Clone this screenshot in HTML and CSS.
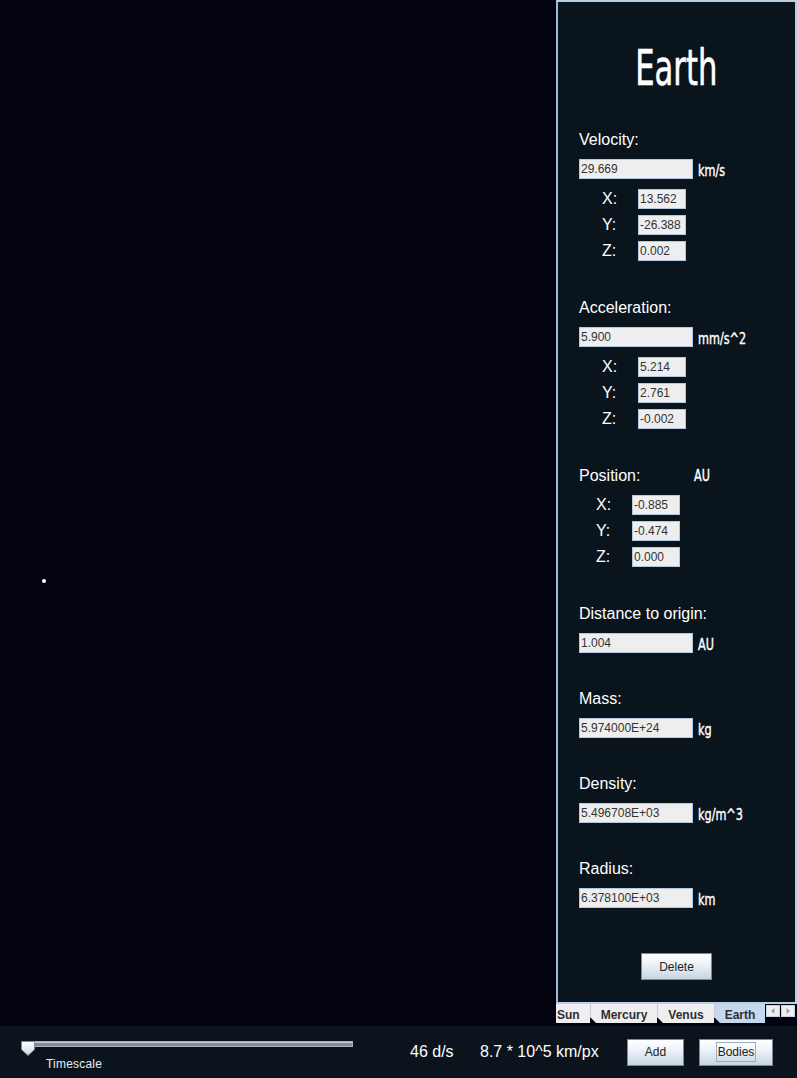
FILE: index.html
```
<!DOCTYPE html>
<html>
<head>
<meta charset="utf-8">
<title>Earth</title>
<link rel="stylesheet" href="styles.css">
</head>
<body>
<div class="app">
  <div class="main">
    <div class="space"><span class="body-dot"></span></div>
    <div class="side">
      <div class="panel">
        <h1 class="title"><span class="title-text">Earth</span></h1>

        <section class="group first">
          <div class="label">Velocity:</div>
          <div class="value-row"><div class="field wide">29.669</div><span class="unit">km/s</span></div>
          <div class="axes">
            <div class="axis"><span class="axis-label">X:</span><div class="field small">13.562</div></div>
            <div class="axis"><span class="axis-label">Y:</span><div class="field small">-26.388</div></div>
            <div class="axis"><span class="axis-label">Z:</span><div class="field small">0.002</div></div>
          </div>
        </section>

        <section class="group sep">
          <div class="label">Acceleration:</div>
          <div class="value-row"><div class="field wide">5.900</div><span class="unit">mm/s^2</span></div>
          <div class="axes">
            <div class="axis"><span class="axis-label">X:</span><div class="field small">5.214</div></div>
            <div class="axis"><span class="axis-label">Y:</span><div class="field small">2.761</div></div>
            <div class="axis"><span class="axis-label">Z:</span><div class="field small">-0.002</div></div>
          </div>
        </section>

        <section class="group sep">
          <div class="label label-row"><span class="label-fixed">Position:</span><span class="unit unit-inline">AU</span></div>
          <div class="axes axes-pos">
            <div class="axis"><span class="axis-label">X:</span><div class="field small">-0.885</div></div>
            <div class="axis"><span class="axis-label">Y:</span><div class="field small">-0.474</div></div>
            <div class="axis"><span class="axis-label">Z:</span><div class="field small">0.000</div></div>
          </div>
        </section>

        <section class="group sep">
          <div class="label">Distance to origin:</div>
          <div class="value-row"><div class="field wide">1.004</div><span class="unit">AU</span></div>
        </section>

        <section class="group sep2">
          <div class="label">Mass:</div>
          <div class="value-row"><div class="field wide">5.974000E+24</div><span class="unit">kg</span></div>
        </section>

        <section class="group sep2">
          <div class="label">Density:</div>
          <div class="value-row"><div class="field wide">5.496708E+03</div><span class="unit">kg/m^3</span></div>
        </section>

        <section class="group sep2">
          <div class="label">Radius:</div>
          <div class="value-row"><div class="field wide">6.378100E+03</div><span class="unit">km</span></div>
        </section>

        <div class="actions"><button class="btn btn-delete">Delete</button></div>
      </div>
      <div class="tabs">
        <div class="tab tab-sun">Sun</div>
        <div class="tab cut">Mercury</div>
        <div class="tab cut">Venus</div>
        <div class="tab cut selected">Earth</div>
        <div class="tab-scroll">
          <span class="arrow-btn"><svg width="12" height="10" viewBox="0 0 12 10"><polygon points="7.5,2 7.5,8 4,5" fill="#9aa0a6"/></svg></span>
          <span class="arrow-btn"><svg width="12" height="10" viewBox="0 0 12 10"><polygon points="4.5,2 4.5,8 8,5" fill="#9aa0a6"/></svg></span>
        </div>
      </div>
    </div>
  </div>
  <div class="bottombar">
    <div class="slider-block">
      <div class="slider">
        <div class="track"></div>
        <svg class="thumb" width="15" height="16" viewBox="0 0 15 16">
          <defs>
            <linearGradient id="tg" x1="0" y1="0" x2="0" y2="1">
              <stop offset="0" stop-color="#ffffff"/>
              <stop offset="1" stop-color="#c9d6e3"/>
            </linearGradient>
          </defs>
          <polygon points="0.5,0.5 13.5,0.5 13.5,8.5 7,14.5 0.5,8.5" fill="url(#tg)" stroke="#7d8b99" stroke-width="1"/>
        </svg>
      </div>
      <div class="slider-label">Timescale</div>
    </div>
    <span class="readout speed">46 d/s</span>
    <span class="readout scale">8.7 * 10^5 km/px</span>
    <button class="btn btn-add">Add</button>
    <button class="btn btn-bodies"><span class="focus">Bodies</span></button>
  </div>
</div>
</body>
</html>
```
FILE: styles.css
```
* { box-sizing: border-box; }
html, body { margin: 0; padding: 0; }
body {
  width: 797px;
  height: 1078px;
  overflow: hidden;
  background: #03030f;
  font-family: "Liberation Sans", Arial, sans-serif;
}
.app { display: flex; flex-direction: column; width: 797px; height: 1078px; }
.main { display: flex; height: 1026px; }
.space {
  position: relative;
  width: 556px;
  height: 1026px;
  background: #03030f;
}
.body-dot {
  position: absolute;
  left: 42px;
  top: 579px;
  width: 4px;
  height: 4px;
  border-radius: 50%;
  background: #ffffff;
}
.side { width: 241px; height: 1026px; background: #03030f; display: flex; flex-direction: column; }
.panel {
  width: 241px;
  height: 1004px;
  border: 2px solid #b8cfe5;
  border-left-color: #9fb6dc;
  background: #0a141d;
  color: #ffffff;
}
.title {
  margin: 36px 0 0;
  height: 60px;
  line-height: 60px;
  text-align: center;
  font-weight: normal;
  font-size: 50px;
  font-family: "DejaVu Sans Condensed", "Liberation Sans", sans-serif;
}
.title-text { display: inline-block; transform: scaleX(0.68); -webkit-text-stroke: 0.6px #ffffff; }
.group { padding-left: 21px; }
.group.first { margin-top: 33px; }
.group.sep { margin-top: 38px; }
.group.sep2 { margin-top: 37px; }
.label { font-size: 16px; line-height: 18px; height: 18px; color: #ffffff; }
.label-row { display: flex; align-items: baseline; }
.label-fixed { width: 115px; }
.value-row { margin-top: 10px; height: 20px; display: flex; align-items: center; }
.field {
  height: 20px;
  border: 1px solid #b3c8df;
  background: #eeeeee;
  color: #333333;
  font-size: 12px;
  line-height: 18px;
  padding-left: 1px;
  white-space: nowrap;
  overflow: hidden;
}
.field.wide { width: 114px; }
.field.small { width: 48px; }
.unit {
  display: inline-block;
  margin-left: 5px;
  padding-top: 3px;
  font-family: "DejaVu Sans Condensed", "Liberation Sans", sans-serif;
  font-size: 16px;
  color: #ffffff;
  -webkit-text-stroke: 0.4px #ffffff;
  transform: scaleX(0.78);
  transform-origin: left center;
}
.unit-inline { margin-left: 0; padding-top: 0; }
.axes { margin-top: 10px; padding-left: 23px; display: flex; flex-direction: column; gap: 6px; }
.axes-pos { padding-left: 17px; }
.axis { display: flex; align-items: center; height: 20px; }
.axis-label { width: 36px; font-size: 16px; line-height: 18px; color: #ffffff; }
.actions { margin-top: 45px; display: flex; justify-content: center; }
.btn {
  height: 27px;
  padding: 0;
  border: 1px solid #7a8898;
  background: linear-gradient(#ffffff 0%, #f1f5f9 35%, #c6d5e4 100%);
  color: #222222;
  font-family: "Liberation Sans", Arial, sans-serif;
  font-size: 12px;
}
.btn-delete { width: 71px; }
.tabs { display: flex; height: 19px; }
.tab {
  height: 19px;
  background: #eeeeee;
  color: #2e2e33;
  font-weight: bold;
  font-size: 12px;
  line-height: 16px;
  padding-top: 3px;
  white-space: nowrap;
  text-align: center;
}
.tab.cut { clip-path: polygon(0 0, 100% 0, 100% 100%, 6px 100%, 0 calc(100% - 6px)); border-left: 1px solid #c8ccd2; }
.tab-sun { width: 34px; text-align: left; padding-left: 1px; }
.tab:nth-child(2) { width: 67px; }
.tab:nth-child(3) { width: 57px; }
.tab.selected { width: 51px; background: #c5d9ee; }
.tab-scroll { display: flex; gap: 1px; padding: 1px 0 0 1px; }
.arrow-btn {
  width: 14px;
  height: 12px;
  background: #eeeeee;
  border: 1px solid #c0d2e6;
  display: flex;
  align-items: center;
  justify-content: center;
}
.bottombar {
  height: 52px;
  background: #0b141d;
  display: flex;
  align-items: center;
  color: #ffffff;
}
.slider-block { width: 410px; align-self: stretch; padding-top: 11px; }
.slider { position: relative; height: 14px; }
.track {
  margin-left: 33px;
  margin-top: 4px;
  width: 320px;
  height: 6px;
  border: 1px solid #a5b0bb;
  background: #7f8c99;
  box-shadow: inset 0 1px 0 #c3ccd5;
}
.thumb { position: absolute; left: 21px; top: 0; }
.slider-label {
  margin-top: 2px;
  margin-left: 46px;
  font-size: 12px;
  line-height: 14px;
  letter-spacing: 0.2px;
  color: #e6edf4;
}
.readout { font-size: 16px; line-height: 18px; white-space: nowrap; }
.speed { width: 70px; }
.scale { width: 147px; }
.btn-add { width: 57px; }
.btn-bodies { width: 74px; margin-left: 15px; display: flex; align-items: center; justify-content: center; }
.focus { border: 1px solid #9aabc2; padding: 2px 1px; line-height: 14px; }
```
